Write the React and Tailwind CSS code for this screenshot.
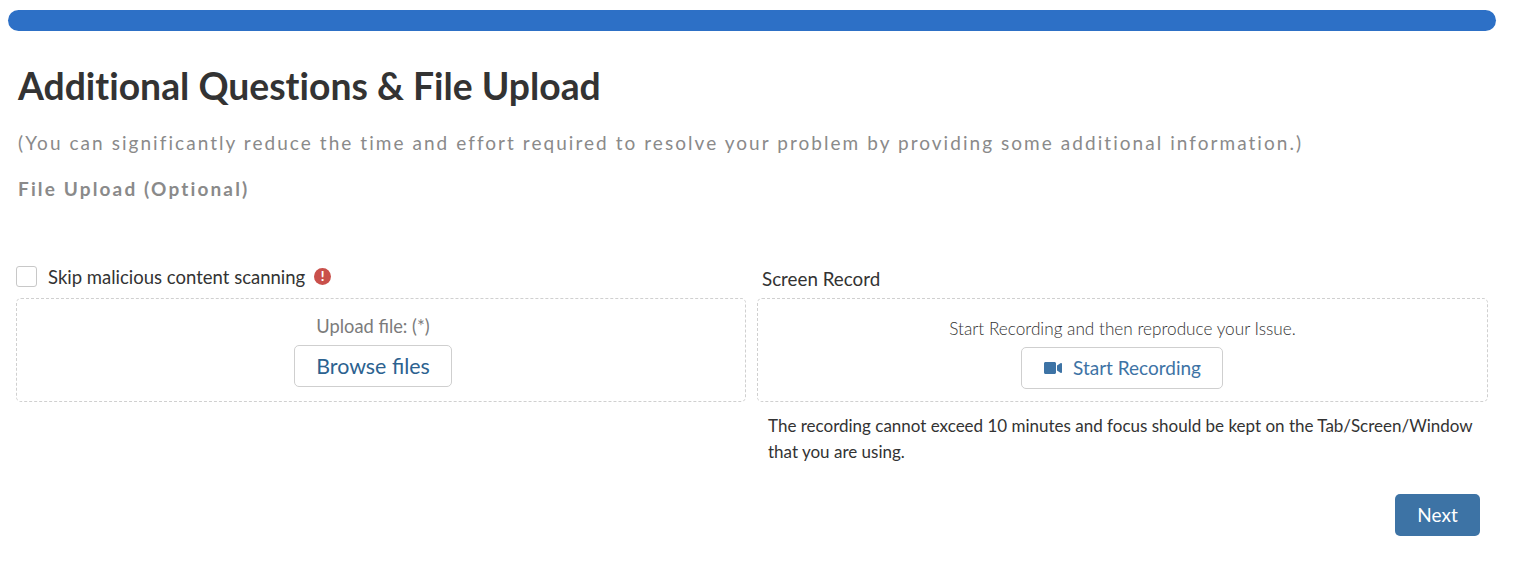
import { FaVideo } from "react-icons/fa";

function DropBox({ children, className = "" }) {
  return (
    <div className={`flex flex-col items-center rounded-[5px] border border-dashed border-[#d0d0d0] ${className}`}>
      {children}
    </div>
  );
}

export default function App() {
  return (
    <div className="h-[562px] overflow-hidden bg-white pt-[10px] font-['Lato',sans-serif] text-[#333]">
      <div className="ml-[8px] mr-[24px] h-[21px] rounded-full bg-[#2d70c6]" />

      <div className="pl-[18px] pt-[31px]">
        <h1 className="text-[37.3px] leading-[48px] font-bold text-[#333] [font-variant-ligatures:none]">Additional Questions &amp; File Upload</h1>
        <p className="mt-[21px] text-[19px] leading-[24px] tracking-[2.05px] text-[#8a8a8a]">
          (You can significantly reduce the time and effort required to resolve your problem by providing some additional information.)
        </p>
        <p className="mt-[22px] text-[19px] leading-[24px] font-bold tracking-[2.15px] text-[#8a8a8a]">File Upload (Optional)</p>
      </div>

      <div className="mt-[64px] ml-[16px] mr-[32px] grid grid-cols-[730px_731px] gap-x-[11px]">
        <div>
          <label className="flex h-[33px] items-center pb-[11px]">
            <span className="h-[21px] w-[21px] rounded-[3px] border border-[#c8c8c8]" />
            <span className="mt-[2px] ml-[11px] text-[18.5px] leading-[24px] text-[#333]">Skip malicious content scanning</span>
            <span className="ml-[9px] flex h-[17px] w-[17px] items-center justify-center rounded-full bg-[#c9504b] text-[13px] leading-none font-black text-white">!</span>
          </label>
          <DropBox className="h-[104px] pt-[15px] pr-[16px]">
            <p className="text-[18.3px] leading-[24px] text-[#7b7b7b]">Upload file: (*)</p>
            <button className="mt-[7px] h-[42px] w-[158px] rounded-[5px] border border-[#cfcfcf] bg-white text-[21.4px] text-[#2c6290]">
              Browse files
            </button>
          </DropBox>
        </div>

        <div>
          <div className="flex h-[33px] items-center pb-[6px] pl-[5px] text-[18.8px] leading-[24px] text-[#333]">Screen Record</div>
          <DropBox className="h-[104px] pt-[18px]">
            <p className="text-[17.2px] leading-[24px] font-light text-[#333]">Start Recording and then reproduce your Issue.</p>
            <button className="mt-[6px] mr-[2px] flex h-[42px] w-[202px] items-center justify-center gap-[11px] rounded-[5px] border border-[#cfcfcf] bg-white pl-[2px] text-[19px] text-[#3d73a5]">
              <FaVideo size={18} color="#3d73a5" />
              Start Recording
            </button>
          </DropBox>
          <p className="mt-[11px] ml-[11px] w-[712px] text-[17px] leading-[26px] text-[#333]">
            The recording cannot exceed 10 minutes and focus should be kept on the Tab/Screen/Window that you are using.
          </p>
        </div>
      </div>

      <div className="mr-[40px] mt-[29px] flex justify-end">
        <button className="h-[42px] w-[85px] rounded-[5px] bg-[#3d73a5] text-[19px] text-white">Next</button>
      </div>
    </div>
  );
}
